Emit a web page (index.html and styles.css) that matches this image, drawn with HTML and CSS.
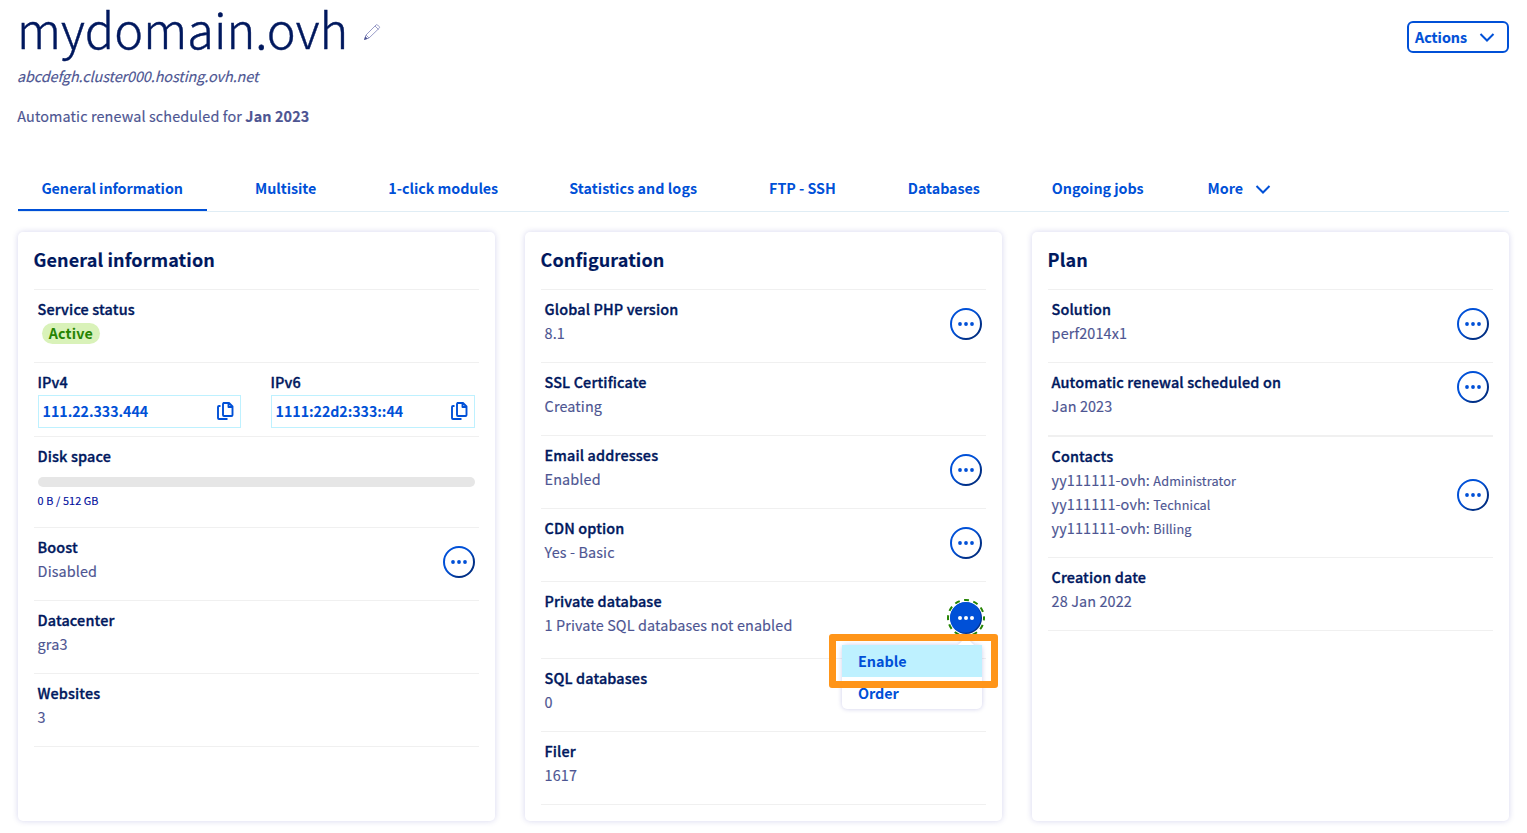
FILE: index.html
```html
<!DOCTYPE html>
<html lang="en">
<head>
<meta charset="utf-8">
<title>mydomain.ovh</title>
<link rel="stylesheet" href="styles.css">
</head>
<body>
<svg class="defs" aria-hidden="true">
  <defs>
    <linearGradient id="ring" x1="0" y1="0" x2="1" y2="1">
      <stop offset="0.45" stop-color="#0050d7"/>
      <stop offset="0.75" stop-color="#002f86"/>
    </linearGradient>
    <symbol id="dots" viewBox="0 0 32 32">
      <circle cx="16" cy="16" r="15" fill="none" stroke="url(#ring)" stroke-width="2"/>
      <circle cx="10" cy="16" r="1.900" fill="#0050d7"/><circle cx="16" cy="16" r="1.900" fill="#0050d7"/><circle cx="22" cy="16" r="1.900" fill="#0050d7"/>
    </symbol>
    <symbol id="chevron" viewBox="0 0 16 10">
      <path d="M1.500 2 8 8.500l6.500-6.500" fill="none" stroke="#0050d7" stroke-width="2"/>
    </symbol>
    <symbol id="copy" viewBox="0 0 18 20">
      <path d="M7 2h6l3.500 3.500V14Q16.500 15 15.500 15H8Q7 15 7 14V3Q7 2 8 2M12.500 2.500v3.500h3.500M4.500 5H3Q2 5 2 6V17Q2 18 3 18h8.500" fill="none" stroke="#0050d7" stroke-width="1.900" stroke-linejoin="round"/>
    </symbol>
  </defs>
</svg>
<header class="header">
  <div>
    <div class="title-line">
      <h1>mydomain.ovh</h1>
      <svg class="pencil" viewBox="0 0 18 18"><path d="M1.500 16.500 3 12 13 2q.8-.8 1.600 0l1.600 1.600q.8.8 0 1.600L6 15zM12 3l3.500 3.500M3 12l3 3" fill="none" stroke="#8084ba" stroke-width=".8"/><path d="M1 17l1.300-3.700L4.700 15.700z" fill="#4d5592"/></svg>
    </div>
    <p class="host">abcdefgh.cluster000.hosting.ovh.net</p>
    <p class="renewal">Automatic renewal scheduled for <strong>Jan 2023</strong></p>
  </div>
  <button class="actions">Actions <svg class="chevron"><use href="#chevron"/></svg></button>
</header>
<nav class="tabs">
  <a class="tab active">General information</a>
  <a class="tab">Multisite</a>
  <a class="tab">1-click modules</a>
  <a class="tab logs">Statistics and logs</a>
  <a class="tab">FTP - SSH</a>
  <a class="tab">Databases</a>
  <a class="tab">Ongoing jobs</a>
  <a class="tab more">More <svg class="chevron"><use href="#chevron"/></svg></a>
</nav>
<main class="cards">
  <section class="card">
    <h2>General information</h2>
    <div class="row"><dl><dt>Service status</dt><dd><span class="badge">Active</span></dd></dl></div>
    <div class="row ips">
      <dl><dt>IPv4</dt><dd class="clip"><span>111.22.333.444</span><svg class="copy"><use href="#copy"/></svg></dd></dl>
      <dl><dt>IPv6</dt><dd class="clip"><span>1111:22d2:333::44</span><svg class="copy"><use href="#copy"/></svg></dd></dl>
    </div>
    <div class="row disk"><dl><dt>Disk space</dt><dd class="usage"><div class="bar"></div><small>0 B / 512 GB</small></dd></dl></div>
    <div class="row"><dl><dt>Boost</dt><dd>Disabled</dd></dl><svg class="menu"><use href="#dots"/></svg></div>
    <div class="row"><dl><dt>Datacenter</dt><dd>gra3</dd></dl></div>
    <div class="row"><dl><dt>Websites</dt><dd>3</dd></dl></div>
  </section>
  <section class="card">
    <h2>Configuration</h2>
    <div class="row"><dl><dt>Global PHP version</dt><dd>8.1</dd></dl><svg class="menu"><use href="#dots"/></svg></div>
    <div class="row"><dl><dt>SSL Certificate</dt><dd>Creating</dd></dl></div>
    <div class="row"><dl><dt>Email addresses</dt><dd>Enabled</dd></dl><svg class="menu"><use href="#dots"/></svg></div>
    <div class="row"><dl><dt>CDN option</dt><dd>Yes - Basic</dd></dl><svg class="menu"><use href="#dots"/></svg></div>
    <div class="row private"><dl><dt>Private database</dt><dd>1 Private SQL databases not enabled</dd></dl>
      <div class="open">
        <svg class="open-icon" viewBox="0 0 40 40">
          <circle cx="20" cy="20" r="18" fill="none" stroke="#268403" stroke-width="2" stroke-dasharray="5 4.425" stroke-dashoffset="2.500"/>
          <circle cx="20" cy="20" r="16" fill="url(#ring)"/><circle cx="19.500" cy="19.500" r="15.300" fill="#0050d7"/>
          <circle cx="14" cy="20" r="2" fill="#fff"/><circle cx="20" cy="20" r="2" fill="#fff"/><circle cx="26" cy="20" r="2" fill="#fff"/>
        </svg>
        <div class="dropdown"><a class="item current">Enable</a><a class="item">Order</a></div>
        <div class="highlight"></div>
      </div>
    </div>
    <div class="row"><dl><dt>SQL databases</dt><dd>0</dd></dl></div>
    <div class="row"><dl><dt>Filer</dt><dd>1617</dd></dl></div>
  </section>
  <section class="card">
    <h2>Plan</h2>
    <div class="row"><dl><dt>Solution</dt><dd>perf2014x1</dd></dl><svg class="menu"><use href="#dots"/></svg></div>
    <div class="row renew"><dl><dt>Automatic renewal scheduled on</dt><dd>Jan 2023</dd></dl><svg class="menu"><use href="#dots"/></svg></div>
    <div class="row contacts"><dl><dt>Contacts</dt><dd>yy111111-ovh: <span class="role">Administrator</span></dd><dd>yy111111-ovh: <span class="role">Technical</span></dd><dd>yy111111-ovh: <span class="role">Billing</span></dd></dl><svg class="menu"><use href="#dots"/></svg></div>
    <div class="row"><dl><dt>Creation date</dt><dd>28 Jan 2022</dd></dl></div>
  </section>
</main>
</body>
</html>
```
FILE: styles.css
```css
* { box-sizing: border-box; }
body {
  margin: 0;
  padding: 0 18px;
  height: 833px;
  overflow: hidden;
  background: #fff;
  color: #4d5592;
  font: 14.4px/24px "Noto Sans CJK JP", "Noto Sans", sans-serif;
  letter-spacing: 0.12px;
  -webkit-text-stroke: 0.15px;
}
h1, h2, p, dl, dt, dd { margin: 0; }
svg { display: block; flex: none; }
.defs { position: absolute; width: 0; height: 0; }

.header { display: flex; justify-content: space-between; height: 165px; }
.title-line { display: flex; height: 64px; }
h1 {
  margin-left: -1px;
  color: #00185e;
  font-size: 48.7px;
  font-weight: 300;
  line-height: 57px;
  letter-spacing: 0;
  -webkit-text-stroke: 0.4px;
}
.pencil { width: 18px; height: 18px; margin: 23px 0 0 15px; }
.host { margin-left: -1px; font-style: italic; letter-spacing: -0.08px; }
.renewal { margin: 16px 0 0 -0.7px; }
.renewal strong { font-weight: 700; }
.actions {
  display: flex;
  align-items: center;
  justify-content: space-between;
  width: 102px;
  height: 32px;
  margin: 21px 0 0;
  padding: 0 12px 0 6px;
  border: 2px solid #0050d7;
  border-radius: 6px;
  background: #fff;
  color: #0050d7;
  font: 700 14.3px/24px "Noto Sans CJK JP", sans-serif;
}
.chevron { width: 16px; height: 10px; }

.tabs { display: flex; height: 47px; border-bottom: 1px solid #e0edf5; }
.tab {
  height: 46px;
  margin-right: 24px;
  padding: 11px 24px 0;
  color: #0050d7;
  font-size: 14.3px;
  font-weight: 700;
  line-height: 24px;
  letter-spacing: -0.04px;
  white-space: nowrap;
  -webkit-text-stroke: 0;
}
.tab.active { width: 189px; padding-left: 23.400px; border-bottom: 2px solid #0050d7; }
.logs { padding-left: 23px; letter-spacing: 0.06px; }
.more { display: flex; gap: 12px; padding-left: 16px; }
.more .chevron { margin-top: 8px; }

.cards { display: grid; grid-template-columns: repeat(3, 1fr); gap: 30px; margin-top: 20px; }
.card {
  height: 589px;
  padding: 0 16px;
  border-radius: 5px;
  background: #fff;
  box-shadow: 0 0 6px rgba(0, 0, 150, 0.17);
}
h2 {
  height: 58px;
  padding-top: 15px;
  border-bottom: 1px solid #f0f0f0;
  color: #00185e;
  font-size: 18px;
  font-weight: 700;
  line-height: 24px;
  text-indent: -0.5px;
}
.row {
  display: flex;
  justify-content: space-between;
  height: 73px;
  padding: 7px 4px 0;
  border-bottom: 1px solid #f0f0f0;
}
dt { color: #00185e; font-weight: 500; letter-spacing: 0.16px; text-indent: -0.5px; -webkit-text-stroke: 0.35px; }
dd { height: 24px; text-indent: -0.4px; }
.menu { width: 32px; height: 32px; margin-top: 11px; }
.badge {
  display: block;
  width: 58px;
  height: 21px;
  margin: 2px 0 0 4px;
  border-radius: 11px;
  background: #d9f2b9;
  color: #268403;
  font-size: 14.3px;
  font-weight: 700;
  line-height: 20px;
  text-align: center;
  -webkit-text-stroke: 0;
}
.ips { display: grid; grid-template-columns: 203px 204px; height: 74px; }
.clip {
  display: flex;
  justify-content: space-between;
  height: 33px;
  margin-top: 1px;
  padding: 0 6px 0 4px;
  border: 1px solid #bef1ff;
  color: #0050d7;
  font-size: 14.2px;
  font-weight: 700;
  line-height: 30px;
  letter-spacing: -0.03px;
  -webkit-text-stroke: 0;
}
.copy { width: 18px; height: 20px; margin-top: 5px; }
.disk { height: 91px; }
.disk dl { width: 100%; }
.usage { height: auto; }
.bar { height: 10px; margin-top: 9px; border-radius: 5px; background: #e6e6e6; }
small { display: block; margin-top: 5px; color: #000e9c; font-size: 10.8px; line-height: 16px; }
.private { height: 77px; }
.open { position: relative; width: 32px; height: 32px; margin-top: 13px; }
.open-icon { width: 40px; height: 40px; margin: -4px; }
.dropdown {
  position: absolute;
  z-index: 1;
  top: 43px;
  right: 0;
  width: 140px;
  height: 64px;
  border-radius: 5px;
  background: #fff;
  box-shadow: 0 0 5px rgba(0, 0, 150, 0.2);
}
.dropdown::before {
  content: "";
  position: absolute;
  top: -8px;
  right: 8px;
  border: 8px solid transparent;
  border-top: 0;
  border-bottom-color: #fff;
  filter: drop-shadow(0 -1px 1px rgba(0, 0, 150, 0.15));
}
.item {
  display: block;
  height: 32px;
  padding-left: 16px;
  color: #0050d7;
  font-weight: 700;
  line-height: 32px;
  letter-spacing: -0.05px;
  -webkit-text-stroke: 0;
}
.current { background: #bef1ff; }
.highlight {
  position: absolute;
  z-index: 2;
  top: 32px;
  left: -121px;
  width: 169px;
  height: 54px;
  border: 7px solid #ff9519;
  border-radius: 3px;
}
.renew { height: 74px; border-bottom-width: 2px; }
.renew .menu { margin-top: 1px; }
.contacts { height: 121px; }
.contacts .menu { margin-top: 35px; }
.role { font-size: 12.7px; }
```
